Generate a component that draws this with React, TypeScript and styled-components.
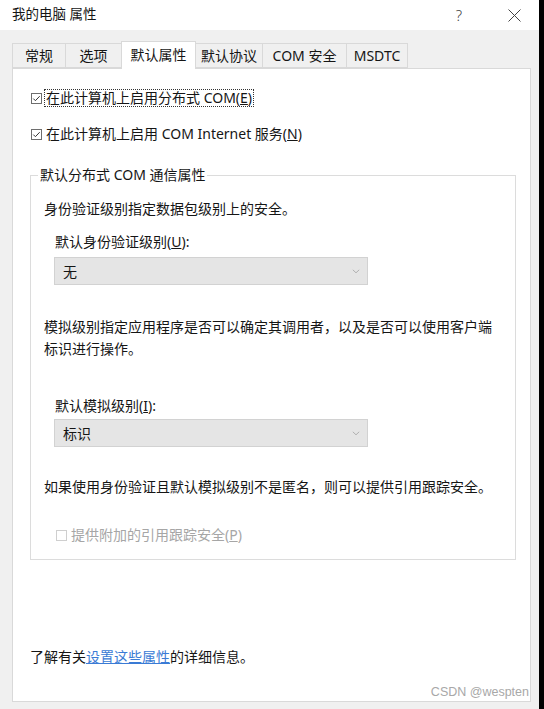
import React from "react";
import styled, { createGlobalStyle } from "styled-components";

const FONT = `"Noto Sans", "Noto Sans CJK SC", sans-serif`;

const GlobalStyle = createGlobalStyle`
  html, body { margin: 0; padding: 0; background: #000; }
  body { font-family: ${FONT}; -webkit-font-smoothing: antialiased; }
  * { box-sizing: border-box; }
`;

const Window = styled.div`
  width: 539px;
  height: 709px;
  background: #f0f0f0;
  display: flex;
  flex-direction: column;
  color: #151515;
  font-family: ${FONT};
  font-size: 14px;
`;

const TitleBar = styled.div`
  height: 30px;
  flex: none;
  background: #fff;
  display: flex;
  align-items: center;
  padding: 0 5px 0 12px;
`;

const Title = styled.div`
  flex: 1;
  line-height: 20px;
  margin-top: -2px;
  font-size: 13.5px;
  color: #151515;
`;

const HelpButton = styled.div`
  width: 30px;
  text-align: center;
  font-size: 15px;
  font-weight: 300;
  color: #444;
  line-height: 20px;
`;

const CloseButton = styled.div`
  width: 40px;
  margin-left: 20px;
  display: flex;
  align-items: center;
  justify-content: center;
`;

const Body = styled.div`
  flex: 1;
  display: flex;
  flex-direction: column;
  padding: 0 8px 7px 12px;
`;

const TabRow = styled.div`
  height: 38px;
  flex: none;
  display: flex;
  align-items: flex-end;
`;

const Tab = styled.div<{ $w: number; $active?: boolean; $first?: boolean }>`
  width: ${(p) => p.$w}px;
  height: ${(p) => (p.$active ? 28 : 25)}px;
  margin-left: ${(p) => (p.$first ? 0 : -1)}px;
  margin-bottom: ${(p) => (p.$active ? -1 : 0)}px;
  position: relative;
  z-index: ${(p) => (p.$active ? 2 : 1)};
  background: ${(p) => (p.$active ? "#fff" : "#f0f0f0")};
  border: 1px solid #d9d9d9;
  border-bottom: ${(p) => (p.$active ? "none" : "1px solid #d9d9d9")};
  display: flex;
  align-items: center;
  justify-content: center;
  padding-bottom: ${(p) => (p.$active ? 2 : 0)}px;
  line-height: 20px;
  color: #151515;
  white-space: nowrap;
`;

const Panel = styled.div`
  flex: 1;
  background: #fff;
  border: 1px solid #d9d9d9;
  display: flex;
  flex-direction: column;
  padding: 20px 14px 1px 17px;
`;

const CheckRow = styled.label<{ $mt?: number; $ml?: number; $disabled?: boolean }>`
  display: flex;
  align-items: center;
  height: 18px;
  margin-top: ${(p) => p.$mt ?? 0}px;
  margin-left: ${(p) => p.$ml ?? 1}px;
  gap: 1px;
  color: ${(p) => (p.$disabled ? "#a6a6a6" : "#151515")};
`;

const BoxSvg = styled.svg`
  flex: none;
  display: block;
`;

const CheckText = styled.span<{ $focus?: boolean }>`
  border: 1px ${(p) => (p.$focus ? "dotted #333" : "solid transparent")};
  padding: 0 1px;
  line-height: 16px;
  margin-left: 1px;
  white-space: nowrap;
`;

const Group = styled.fieldset`
  margin: 23px 0 0;
  padding: 0 0 15px 0;
  border: 1px solid #dcdcdc;
  min-width: 0;
  flex: none;
`;

const Legend = styled.legend`
  margin-left: 7px;
  padding: 0 2px;
  line-height: 18px;
  color: #151515;
`;

const GroupBody = styled.div`
  display: flex;
  flex-direction: column;
  padding-left: 13px;
`;

const Text = styled.div<{ $mt: number; $lh?: number }>`
  margin-top: ${(p) => p.$mt}px;
  line-height: ${(p) => p.$lh ?? 20}px;
  color: #151515;
  white-space: nowrap;
`;

const FieldLabel = styled.div<{ $mt: number }>`
  margin-top: ${(p) => p.$mt}px;
  margin-left: 11px;
  line-height: 20px;
  color: #151515;
`;

const Underline = styled.span`
  text-decoration: underline;
`;

const Select = styled.div<{ $mt: number }>`
  margin-top: ${(p) => p.$mt}px;
  margin-left: 10px;
  width: 314px;
  height: 28px;
  background: #e5e5e5;
  border: 1px solid #d2d2d2;
  display: flex;
  align-items: center;
  justify-content: space-between;
  padding: 0 7px 0 8px;
  color: #151515;
`;

const Footer = styled.div`
  margin-top: auto;
  line-height: 20px;
  color: #151515;
`;

const Link = styled.a`
  color: #3a7bd5;
  text-decoration: underline;
  cursor: pointer;
`;

const Watermark = styled.div`
  margin-top: 17px;
  align-self: flex-end;
  margin-right: -13px;
  font-family: "Liberation Sans", Arial, sans-serif;
  font-size: 12.5px;
  line-height: 16px;
  color: #a8a8a8;
`;

const CheckBox = ({ checked, disabled }: { checked?: boolean; disabled?: boolean }) => (
  <BoxSvg width="11" height="11" viewBox="0 0 11 11">
    <rect x="0.5" y="0.5" width="10" height="10" fill="#fff" stroke={disabled ? "#cfcfcf" : "#6e6e6e"} />
    {checked && <path d="M2.3 5.6 L4.4 7.7 L8.7 3.2" fill="none" stroke="#333" strokeWidth="1" />}
  </BoxSvg>
);

const Chevron = () => (
  <svg width="8" height="5" viewBox="0 0 8 5">
    <path d="M0.8 0.8 L4 3.8 L7.2 0.8" fill="none" stroke="#b0b0b0" strokeWidth="1" />
  </svg>
);

const tabs = [
  { label: "常规", w: 54 },
  { label: "选项", w: 57 },
  { label: "默认属性", w: 75, active: true },
  { label: "默认协议", w: 68 },
  { label: "COM 安全", w: 85 },
  { label: "MSDTC", w: 62 },
];

export default function App() {
  return (
    <>
      <GlobalStyle />
      <Window>
        <TitleBar>
          <Title>我的电脑 属性</Title>
          <HelpButton>?</HelpButton>
          <CloseButton>
            <svg width="13" height="13" viewBox="0 0 13 13">
              <path d="M0.5 0.5 L12.5 12.5 M12.5 0.5 L0.5 12.5" stroke="#444" strokeWidth="1" />
            </svg>
          </CloseButton>
        </TitleBar>
        <Body>
          <TabRow>
            {tabs.map((t, i) => (
              <Tab key={t.label} $w={t.w} $active={t.active} $first={i === 0}>
                {t.label}
              </Tab>
            ))}
          </TabRow>
          <Panel>
            <CheckRow>
              <CheckBox checked />
              <CheckText $focus>
                在此计算机上启用分布式 COM(<Underline>E</Underline>)
              </CheckText>
            </CheckRow>
            <CheckRow $mt={18}>
              <CheckBox checked />
              <CheckText>
                在此计算机上启用 COM Internet 服务(<Underline>N</Underline>)
              </CheckText>
            </CheckRow>
            <Group>
              <Legend>默认分布式 COM 通信属性</Legend>
              <GroupBody>
                <Text $mt={15}>身份验证级别指定数据包级别上的安全。</Text>
                <FieldLabel $mt={13}>
                  默认身份验证级别(<Underline>U</Underline>):
                </FieldLabel>
                <Select $mt={5}>
                  <span>无</span>
                  <Chevron />
                </Select>
                <Text $mt={31} $lh={22}>
                  模拟级别指定应用程序是否可以确定其调用者，以及是否可以使用客户端
                  <br />
                  标识进行操作。
                </Text>
                <FieldLabel $mt={36}>
                  默认模拟级别(<Underline>I</Underline>):
                </FieldLabel>
                <Select $mt={3}>
                  <span>标识</span>
                  <Chevron />
                </Select>
                <Text $mt={30}>如果使用身份验证且默认模拟级别不是匿名，则可以提供引用跟踪安全。</Text>
                <CheckRow $mt={29} $ml={12} $disabled>
                  <CheckBox disabled />
                  <CheckText>
                    提供附加的引用跟踪安全(<Underline>P</Underline>)
                  </CheckText>
                </CheckRow>
              </GroupBody>
            </Group>
            <Footer>
              了解有关<Link>设置这些属性</Link>的详细信息。
            </Footer>
            <Watermark>CSDN @wespten</Watermark>
          </Panel>
        </Body>
      </Window>
    </>
  );
}
